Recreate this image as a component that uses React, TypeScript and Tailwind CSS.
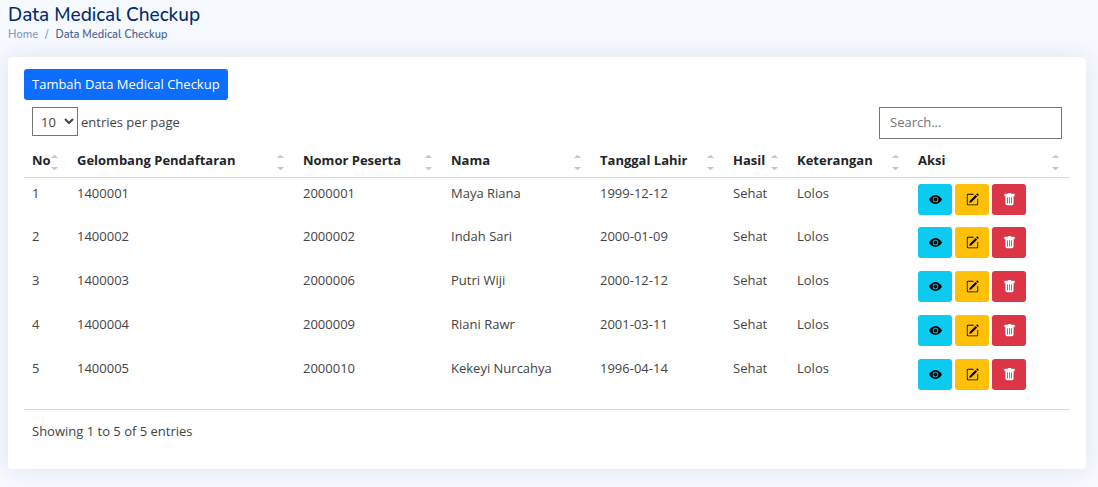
import { BsEyeFill, BsPencilSquare, BsTrashFill } from "react-icons/bs";

const columns = [
  { label: "No", width: "w-[45px]" },
  { label: "Gelombang Pendaftaran", width: "w-[226px]" },
  { label: "Nomor Peserta", width: "w-[148px]" },
  { label: "Nama", width: "w-[149px]" },
  { label: "Tanggal Lahir", width: "w-[133px]" },
  { label: "Hasil", width: "w-[64px]" },
  { label: "Keterangan", width: "w-[121px]" },
  { label: "Aksi", width: "w-[160px]" },
];

const rows = [
  ["1", "1400001", "2000001", "Maya Riana", "1999-12-12", "Sehat", "Lolos"],
  ["2", "1400002", "2000002", "Indah Sari", "2000-01-09", "Sehat", "Lolos"],
  ["3", "1400003", "2000006", "Putri Wiji", "2000-12-12", "Sehat", "Lolos"],
  ["4", "1400004", "2000009", "Riani Rawr", "2001-03-11", "Sehat", "Lolos"],
  ["5", "1400005", "2000010", "Kekeyi Nurcahya", "1996-04-14", "Sehat", "Lolos"],
];

function SortIcon() {
  return (
    <svg width="7" height="20" viewBox="0 0 7 20" className="shrink-0 fill-[#c6c8ca]" aria-hidden="true">
      <path d="M0 8 3 5h1l3 3z" />
      <path d="M0 17h7l-3 3H3z" />
    </svg>
  );
}

function RowActions() {
  const base = "flex h-[31px] w-[34px] items-center justify-center rounded-[3px]";
  return (
    <div className="flex gap-[3px]">
      <button type="button" aria-label="Lihat" className={`${base} bg-[#0dcaf0] text-black`}>
        <BsEyeFill size={13} />
      </button>
      <button type="button" aria-label="Ubah" className={`${base} bg-[#ffc107] text-black`}>
        <BsPencilSquare size={13} />
      </button>
      <button type="button" aria-label="Hapus" className={`${base} bg-[#dc3545] text-white`}>
        <BsTrashFill size={13} />
      </button>
    </div>
  );
}

export default function App() {
  return (
    <main className="min-h-screen bg-[#f6f9ff] px-2 pb-[18px] pt-1 font-['Open_Sans',sans-serif] text-[13px] leading-5 text-[#444444]">
      <header className="font-['Nunito','Noto_Sans',sans-serif]">
        <h1 className="text-[19px] font-medium leading-[22px] text-[#012970]">Data Medical Checkup</h1>
        <nav aria-label="Breadcrumb">
          <ol className="flex gap-[7px] text-[11px] font-semibold leading-[17px] text-[#899bbd]">
            <li>
              <a href="#">Home</a>
            </li>
            <li aria-hidden="true">/</li>
            <li className="text-[#51678f]" aria-current="page">
              Data Medical Checkup
            </li>
          </ol>
        </nav>
      </header>

      <section className="mr-1 mt-[14px] rounded-[4px] bg-white px-4 pb-7 pt-3 shadow-[0_0_24px_rgba(1,41,112,0.1)]">
        <button
          type="button"
          className="block h-[31px] rounded-[3px] bg-[#0d6efd] px-2 pb-px text-white"
        >
          Tambah Data Medical Checkup
        </button>

        <div className="flex items-start justify-between px-2 pt-[7px]">
          <label className="flex items-center gap-[3px]">
            <select defaultValue="10" className="h-[29px] w-[46px] border border-[#767676] bg-white pl-1">
              <option>5</option>
              <option>10</option>
              <option>15</option>
              <option>20</option>
            </select>
            entries per page
          </label>
          <input
            type="search"
            aria-label="Search"
            placeholder="Search..."
            className="h-8 w-[183px] border border-[#767676] px-[10px] pb-[2px] placeholder:text-[#757575]"
          />
        </div>

        <div className="mt-1 border-b border-[#d9d9d9] pb-3">
          <table className="w-full table-fixed border-collapse text-left text-[#444444]">
            <thead>
              <tr className="h-[34px] border-b border-[#d9d9d9] text-[#212529]">
                {columns.map((column) => (
                  <th key={column.label} scope="col" className={`${column.width} p-0 pl-2 font-bold`}>
                    <button type="button" className="flex w-full items-center justify-between pr-[11px] font-bold">
                      {column.label}
                      <SortIcon />
                    </button>
                  </th>
                ))}
              </tr>
            </thead>
            <tbody>
              {rows.map((row) => (
                <tr key={row[0]} className="h-11 align-top">
                  {row.map((value, index) => (
                    <td key={index} className="whitespace-nowrap pl-2 pt-[6px] leading-[18px]">
                      {value}
                    </td>
                  ))}
                  <td className="pl-2 pt-[6px]">
                    <RowActions />
                  </td>
                </tr>
              ))}
            </tbody>
          </table>
        </div>
        <p className="px-2 pt-[11px]">Showing 1 to 5 of 5 entries</p>
      </section>
    </main>
  );
}
